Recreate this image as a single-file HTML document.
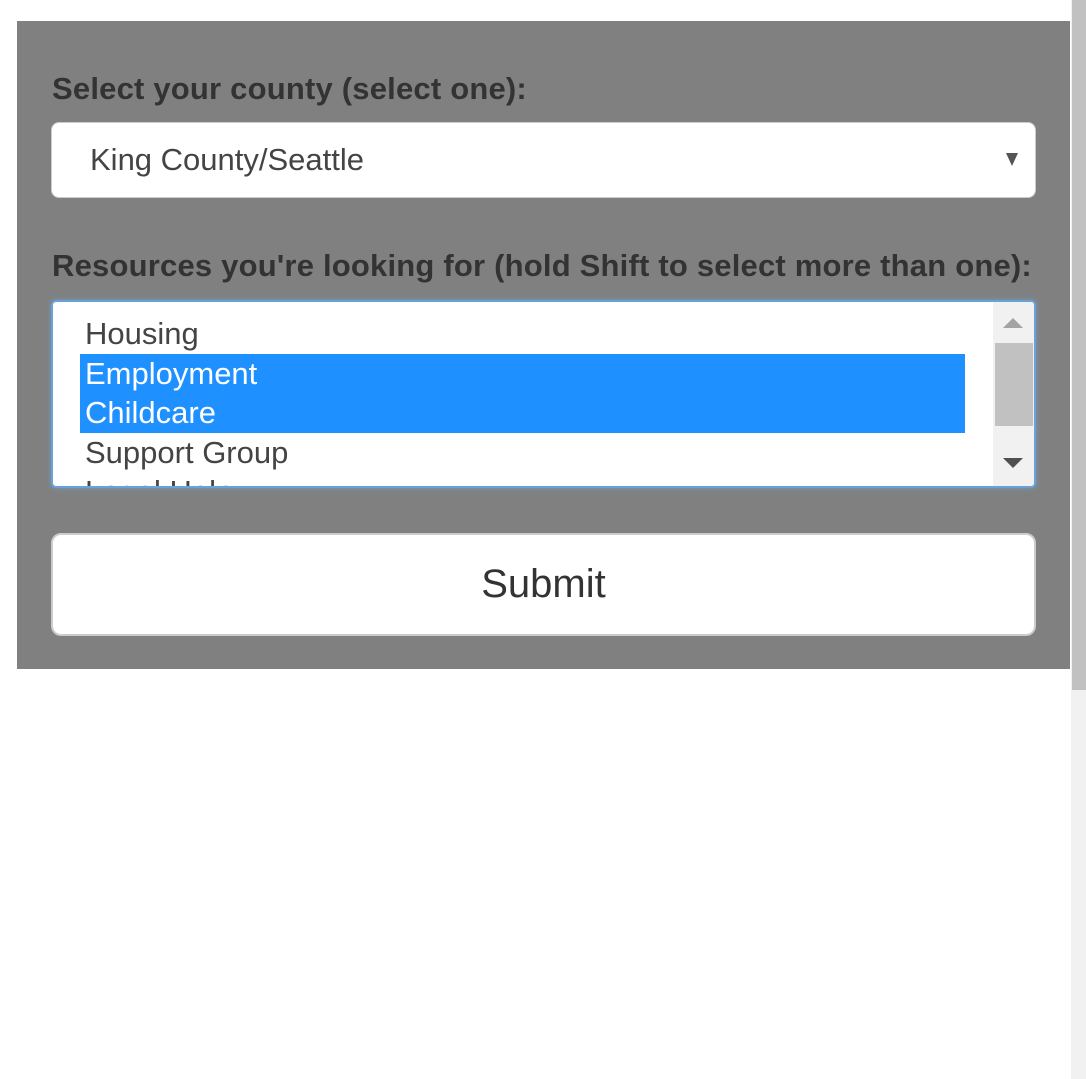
<!DOCTYPE html>
<html><head><meta charset="utf-8"><style>
*{margin:0;padding:0;box-sizing:border-box}
html,body{width:1086px;height:1079px;overflow:hidden;background:#fff;font-family:"Liberation Sans",Arial,sans-serif}
.abs{position:absolute}
.panel{left:17px;top:21px;width:1053px;height:648px;background:#808080}
.lbl{left:52px;font-weight:bold;font-size:31px;color:#333;white-space:nowrap;line-height:1;letter-spacing:0.2px}
.sel{left:51px;top:122px;width:985px;height:76px;background:#fff;border:1px solid #ccc;border-radius:8px}
.item{position:absolute;left:32px;font-size:31px;color:#444;line-height:39.5px;white-space:nowrap}
</style></head><body>
<div class="abs panel"></div>
<div class="abs lbl" style="top:73px">Select your county (select one):</div>
<div class="abs sel">
  <div class="abs" style="left:38px;top:20px;font-size:31px;color:#444;line-height:34px">King County/Seattle</div>
  <div class="abs" style="left:954px;top:30px;width:0;height:0;border-left:6px solid transparent;border-right:6px solid transparent;border-top:13px solid #555"></div>
</div>
<div class="abs lbl" style="top:250px">Resources you're looking for (hold Shift to select more than one):</div>
<div class="abs" style="left:51px;top:300px;width:985px;height:188px;background:#fff;border:2px solid #6aa1d8;border-radius:5px;box-shadow:0 0 6px rgba(102,175,233,.6);overflow:hidden">
  <div class="abs" style="left:27px;top:52px;width:885px;height:79px;background:#1e90ff"></div>
  <div class="item" style="top:12px">Housing</div>
  <div class="item" style="top:51.5px;color:#fff">Employment</div>
  <div class="item" style="top:91px;color:#fff">Childcare</div>
  <div class="item" style="top:130.5px">Support Group</div>
  <div class="item" style="top:170px">Legal Help</div>
  <div class="abs" style="left:940px;top:0;width:41px;height:186px;background:#f1f1f1"></div>
  <div class="abs" style="left:942px;top:41px;width:38px;height:83px;background:#c1c1c1"></div>
  <div class="abs" style="left:950px;top:16px;width:0;height:0;border-left:10px solid transparent;border-right:10px solid transparent;border-bottom:10px solid #a3a3a3"></div>
  <div class="abs" style="left:950px;top:156px;width:0;height:0;border-left:10px solid transparent;border-right:10px solid transparent;border-top:10px solid #505050"></div>
</div>
<div class="abs" style="left:51px;top:533px;width:985px;height:103px;background:#fff;border:2px solid #ccc;border-radius:10px;font-size:40px;color:#333;text-align:center;line-height:99px">Submit</div>
<div class="abs" style="left:1071px;top:0;width:15px;height:1079px;background:#f1f1f1"></div>
<div class="abs" style="left:1072px;top:0;width:14px;height:690px;background:#c1c1c1"></div>
</body></html>
